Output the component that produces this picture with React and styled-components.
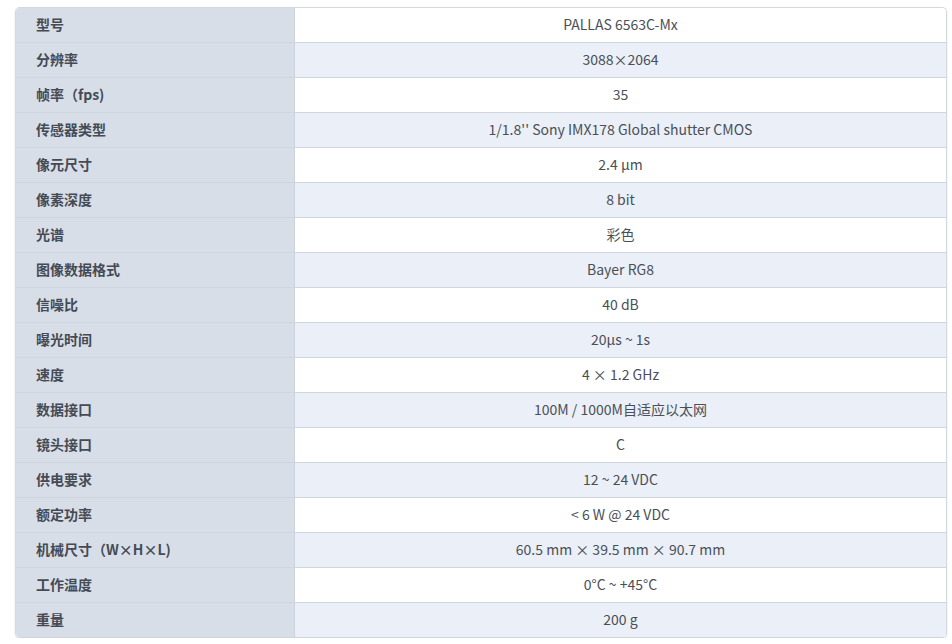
import React from "react";
import styled, { createGlobalStyle } from "styled-components";

const Global = createGlobalStyle`
  html, body { margin: 0; padding: 0; background: #ffffff; }
  body { font-family: "Noto Sans CJK SC", "Noto Sans", sans-serif; }
`;

const Page = styled.div`
  padding: 7px 7px 0 15px;
`;

const Table = styled.div`
  width: 930px;
  border: 1px solid #d3d8e1;
  border-bottom: none;
  border-radius: 5px;
  overflow: hidden;
  box-shadow: 0 1px 2px rgba(0, 0, 0, 0.12);
`;

const Row = styled.div`
  display: grid;
  grid-template-columns: 279px 1fr;
  height: 34px;
  border-bottom: 1px solid #cfd5df;
  background: ${(p) => (p.$alt ? "#ebeff7" : "#ffffff")};
`;

const Label = styled.div`
  display: flex;
  align-items: center;
  padding: 0 0 2px 20px;
  background: #d8dee8;
  border-right: 1px solid #cbd2dd;
  font-size: 14px;
  font-weight: 700;
  color: #454b55;
`;

const Value = styled.div`
  display: flex;
  align-items: center;
  justify-content: center;
  padding-bottom: 2px;
  font-size: 14px;
  color: #4a4f57;
`;

const rows = [
  ["型号", "PALLAS 6563C-Mx"],
  ["分辨率", "3088×2064"],
  ["帧率（fps)", "35"],
  ["传感器类型", "1/1.8'' Sony IMX178 Global shutter CMOS"],
  ["像元尺寸", "2.4 µm"],
  ["像素深度", "8 bit"],
  ["光谱", "彩色"],
  ["图像数据格式", "Bayer RG8"],
  ["信噪比", "40 dB"],
  ["曝光时间", "20µs ~ 1s"],
  ["速度", "4 × 1.2 GHz"],
  ["数据接口", "100M / 1000M自适应以太网"],
  ["镜头接口", "C"],
  ["供电要求", "12 ~ 24 VDC"],
  ["额定功率", "< 6 W @ 24 VDC"],
  ["机械尺寸（W×H×L)", "60.5 mm × 39.5 mm × 90.7 mm"],
  ["工作温度", "0°C ~ +45°C"],
  ["重量", "200 g"],
];

export default function App() {
  return (
    <>
      <Global />
      <Page>
        <Table>
          {rows.map(([k, v], i) => (
            <Row key={k} $alt={i % 2 === 1}>
              <Label>{k}</Label>
              <Value>{v}</Value>
            </Row>
          ))}
        </Table>
      </Page>
    </>
  );
}
